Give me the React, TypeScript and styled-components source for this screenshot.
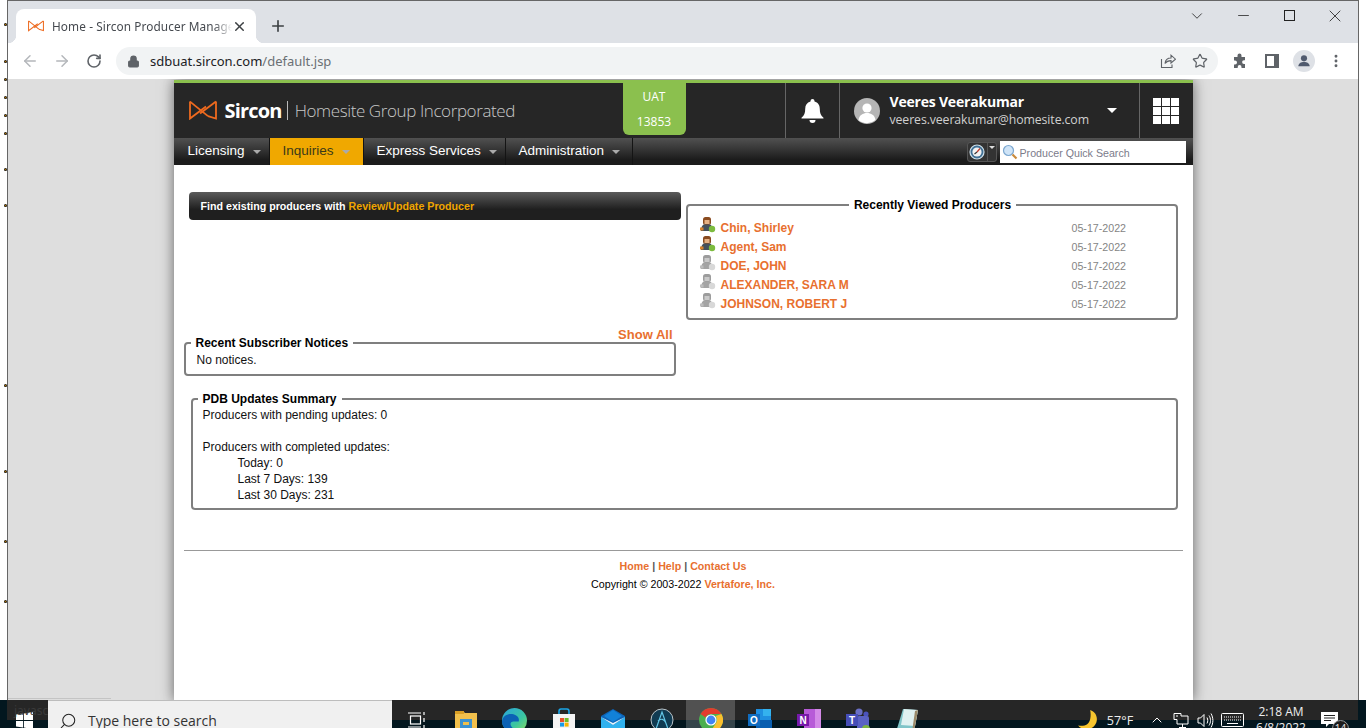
import styled, {createGlobalStyle} from 'styled-components';
import {ArrowLeft, ArrowRight, ChevronDown, ChevronUp, EllipsisVertical, Lock, Minus, Plus, RotateCw, Search, Star, X} from 'lucide-react';

const GlobalStyle = createGlobalStyle`
html, body {
    margin: 0;
    padding: 0;
    background: #fff;
    overflow: hidden;
}
* {
    box-sizing: border-box;
}
`

const Screen = styled.div`
position: relative;
display: flex;
flex-direction: column;
width: 1366px;
height: 728px;
overflow: hidden;
font-family: "Liberation Sans", Arial, sans-serif;
`

const Desk = styled.div`
display: flex;
height: 700px;
flex: none;
`

const Gutter = styled.div`
display: flex;
flex-direction: column;
align-items: flex-end;
width: 7px;
flex: none;
`

const Dot = styled.i<{$top: number}>`
display: block;
width: 3px;
height: 3px;
border-radius: 50%;
margin-top: ${p => p.$top}px;
background: radial-gradient(#a8700c 20%, #000 60%);
`

const Browser = styled.div`
display: flex;
flex-direction: column;
width: 1352px;
flex: none;
border: 1px solid #666;
border-bottom: 0;
`

const TabStrip = styled.div`
display: flex;
align-items: flex-end;
height: 42px;
flex: none;
padding-left: 8px;
background: #dee1e6;
`

const Tab = styled.div`
position: relative;
display: flex;
align-items: center;
width: 240px;
height: 34px;
padding: 0 9px 0 12px;
background: #fff;
border-radius: 8px 8px 0 0;

&::before, &::after {
    content: "";
    position: absolute;
    bottom: 0;
    width: 8px;
    height: 8px;
}
&::before {
    left: -8px;
    background: radial-gradient(circle at 0 0, transparent 8px, #fff 8.5px);
}
&::after {
    right: -8px;
    background: radial-gradient(circle at 100% 0, transparent 8px, #fff 8.5px);
}
`

const TabTitle = styled.span`
flex: 1;
margin-left: 8px;
overflow: hidden;
white-space: nowrap;
font-family: "Noto Sans", sans-serif;
font-size: 11.8px;
letter-spacing: 0.1px;
color: #45494f;
-webkit-mask-image: linear-gradient(to right, #000 90%, transparent 100%);
mask-image: linear-gradient(to right, #000 90%, transparent 100%);
`

const NewTab = styled.div`
display: flex;
align-items: center;
justify-content: center;
width: 28px;
height: 34px;
margin-left: 8px;
color: #3c4043;
`

const WindowControls = styled.div`
display: flex;
align-self: flex-start;
margin-left: auto;
`

const WindowButton = styled.div`
display: flex;
align-items: center;
justify-content: center;
width: 46px;
height: 29px;
color: #222;
`

const MaximizeGlyph = styled.i`
display: block;
width: 11px;
height: 11px;
border: 1px solid #222;
`

const Toolbar = styled.div`
display: flex;
align-items: center;
height: 36px;
flex: none;
padding-left: 6px;
background: #fff;
`

const ToolButton = styled.div<{$dim?: boolean}>`
display: flex;
align-items: center;
justify-content: center;
width: 32px;
height: 32px;
flex: none;
color: ${p => p.$dim ? '#b4b7bb' : '#5f6368'};
`

const Omnibox = styled.div`
display: flex;
align-items: center;
width: 1102px;
height: 28px;
margin: 0 6px;
padding: 0 2px 0 11px;
border-radius: 14px;
background: #f1f3f4;
color: #5f6368;
`

const Url = styled.span`
margin-left: 10px;
font-family: "Noto Sans", sans-serif;
font-size: 13px;
color: #202124;
`

const UrlPath = styled.span`
color: #6b7074;
`

const OmniActions = styled.div`
display: flex;
margin-left: auto;
`

const ProfileDisc = styled.div`
display: flex;
align-items: center;
justify-content: center;
width: 22px;
height: 22px;
border-radius: 50%;
background: #dee1e6;
`

const PageArea = styled.div`
position: relative;
flex: 1;
min-height: 0;
background: #dedede;
overflow: hidden;
`

const GhostTab = styled.div`
position: absolute;
left: 0;
bottom: 0;
width: 103px;
height: 2px;
border-top: 1px solid #c4c4c4;
`

const Sheet = styled.div`
width: 1019px;
height: 100%;
margin: 1px auto 0;
background: #fff;
box-shadow: 0 0 13px rgba(0, 0, 0, 0.55);
border-top: 3px solid #8bc04e;
`

const Header = styled.div`
display: flex;
height: 55px;
background: #262626;
`

const Brand = styled.div`
display: flex;
align-items: center;
width: 449px;
flex: none;
padding: 0 0 1px 15px;
`

const BrandName = styled.span`
margin-left: 8px;
font-family: "Open Sans", sans-serif;
font-size: 20px;
font-weight: 700;
letter-spacing: -0.8px;
color: #fff;
`

const BrandOrg = styled.span`
margin-left: 5px;
padding-left: 7px;
border-left: 1px solid #bbb;
font-family: "Open Sans", sans-serif;
font-size: 17px;
font-weight: 300;
line-height: 19px;
letter-spacing: -0.4px;
color: #c8c8c8;
`

const EnvBadge = styled.div`
position: relative;
z-index: 2;
display: flex;
flex-direction: column;
align-items: center;
justify-content: space-between;
width: 63px;
height: 52px;
flex: none;
padding: 6px 0 5px;
border-radius: 0 0 6px 6px;
background: #8bc04e;
font-family: "Open Sans", sans-serif;
font-size: 12px;
line-height: 16px;
color: #fff;
`

const BellCell = styled.div`
display: flex;
align-items: center;
justify-content: center;
width: 54px;
flex: none;
margin-left: 99px;
border-left: 1px solid #666;
`

const UserCell = styled.div`
display: flex;
align-items: center;
width: 300px;
flex: none;
padding-left: 14px;
border-left: 1px solid #666;
`

const UserText = styled.div`
display: flex;
flex-direction: column;
width: 217px;
margin-left: 10px;
font-family: "Open Sans", sans-serif;
`

const UserName = styled.span`
font-size: 14px;
font-weight: 700;
line-height: 18px;
letter-spacing: -0.2px;
color: #fff;
`

const UserMail = styled.span`
font-size: 12.3px;
line-height: 17px;
letter-spacing: -0.1px;
color: #d0d0d0;
`

const Caret = styled.i`
width: 0;
height: 0;
border-left: 5px solid transparent;
border-right: 5px solid transparent;
border-top: 5px solid #fff;
`

const AppsCell = styled.div`
display: flex;
align-items: center;
flex: 1;
padding-left: 13px;
border-left: 1px solid #666;
`

const AppsGrid = styled.div`
display: grid;
grid-template-columns: repeat(3, 8px);
grid-template-rows: repeat(3, 8px);
gap: 1px;
`

const AppsTile = styled.i`
background: #fff;
`

const Nav = styled.div`
display: flex;
height: 27px;
padding-left: 1px;
background: linear-gradient(#515151, #1c1c1c 80%);
`

const NavItem = styled.div<{$width: number; $active?: boolean}>`
display: flex;
align-items: center;
width: ${p => p.$width}px;
flex: none;
padding: 0 0 3px 13px;
border-right: 1px solid #141414;
background: ${p => p.$active ? '#f0a800' : 'transparent'};
font-size: 13.5px;
color: ${p => p.$active ? '#3a3a1a' : '#fff'};
`

const NavCaret = styled.i`
width: 0;
height: 0;
margin: 3px 0 0 8px;
border-left: 4px solid transparent;
border-right: 4px solid transparent;
border-top: 4px solid #aaa;
`

const NavTools = styled.div`
display: flex;
align-items: center;
margin-left: auto;
padding-right: 7px;
`

const HistoryButton = styled.div`
display: flex;
align-items: center;
width: 30px;
height: 20px;
margin-right: 3px;
border: 1px solid #555;
border-radius: 3px;
background: #333;
`

const HistoryFace = styled.div`
display: flex;
align-items: center;
justify-content: center;
width: 20px;
height: 100%;
border-right: 1px solid #555;
`

const HistoryCaret = styled.i`
width: 0;
height: 0;
margin: -8px 0 0 1px;
border-left: 3px solid transparent;
border-right: 3px solid transparent;
border-top: 3px solid #ddd;
`

const QuickSearch = styled.div`
display: flex;
align-items: center;
width: 186px;
height: 22px;
padding-left: 2px;
background: #fff;
font-size: 10.67px;
color: #7b7b8a;
`

const QuickLabel = styled.span`
margin: 2px 0 0 2px;
`

const Main = styled.div`
display: grid;
grid-template-columns: 492px 492px;
column-gap: 10px;
padding: 27px 0 0 10px;
`

const LeftColumn = styled.div`
display: flex;
flex-direction: column;
`

const Banner = styled.div`
width: 492px;
height: 28px;
margin-left: 5px;
padding: 0 12px;
border-radius: 4px;
background: linear-gradient(#5b5b5b, #1f1f1f 62%);
font-size: 10.67px;
font-weight: 700;
line-height: 28px;
color: #fff;
`

const BannerLink = styled.span`
color: #f0a500;
`

const ShowAll = styled.div`
margin: 107px 3px -6px 0;
text-align: right;
font-size: 13px;
font-weight: 700;
line-height: 15px;
color: #e8702f;
`

const Panel = styled.fieldset<{$mt?: number; $ml?: number; $width?: number}>`
display: block;
width: ${p => p.$width ?? 492}px;
min-width: 0;
margin: ${p => p.$mt ?? 0}px 0 0 ${p => p.$ml ?? 0}px;
border: 2px solid #7f7f7f;
border-radius: 4px;
font-size: 12px;
color: #111;
`

const PanelTitle = styled.legend<{$center?: boolean; $shift?: number}>`
margin: ${p => p.$center ? '0 auto' : `0 0 0 ${p.$shift ?? 0}px`};
padding: 0 5px;
font-size: 12px;
font-weight: 700;
line-height: 14px;
color: #000;
`

const RecentPanel = styled(Panel)`
height: 122px;
padding: 6px 10px 0 12px;
`

const NoticePanel = styled(Panel)`
height: 40px;
padding: 3px 10px 0 11px;
line-height: 14px;
`

const PdbPanel = styled(Panel)`
height: 118px;
padding: 1px 10px 0;
line-height: 16px;
`

const Row = styled.div`
display: flex;
align-items: center;
height: 19px;
`

const RowName = styled.span`
width: 351px;
margin-left: 5px;
font-weight: 700;
color: #e8702f;
`

const RowDate = styled.span`
font-size: 10.67px;
color: #848484;
`

const PdbLine = styled.div<{$indent?: boolean}>`
min-height: 16px;
padding-left: ${p => p.$indent ? 35 : 0}px;
`

const Footer = styled.div`
width: 999px;
margin: 40px 0 0 10px;
padding-top: 8px;
border-top: 1px solid #999;
text-align: center;
font-size: 10.67px;
line-height: 14px;
`

const FooterLinks = styled.div`
font-weight: 700;
color: #555;
`

const FooterLink = styled.span`
font-weight: 700;
color: #e8702f;
`

const Copyright = styled.div`
margin-top: 4px;
color: #000;
`

const Taskbar = styled.div`
position: relative;
display: flex;
height: 40px;
flex: none;
background: linear-gradient(#262626, #262626) 7px 0 / 1351px 20px no-repeat, #03171f;
color: #fff;
`

const GhostLabel = styled.span`
position: absolute;
left: 14px;
top: 2px;
font-family: "Noto Sans", sans-serif;
font-size: 12px;
color: #3a3a3a;
`

const StartCell = styled.div`
position: relative;
display: flex;
align-items: center;
justify-content: center;
width: 48px;
flex: none;
overflow: hidden;
`

const SearchBox = styled.div`
display: flex;
align-items: center;
width: 344px;
flex: none;
padding-left: 11px;
border-top: 1px solid #bdbdbd;
background: #f0f0f0;
color: #222;
`

const SearchText = styled.span`
margin-left: 11px;
font-family: "Open Sans", sans-serif;
font-size: 14px;
color: #333;
`

const TaskCell = styled.div<{$on?: boolean}>`
display: flex;
align-items: center;
justify-content: center;
width: 49px;
flex: none;
background: ${p => p.$on ? 'rgba(255, 255, 255, 0.2)' : 'transparent'};
`

const Tray = styled.div`
display: flex;
margin-left: auto;
padding-right: 16px;
`

const TrayCell = styled.div<{$width: number}>`
display: flex;
align-items: center;
justify-content: center;
width: ${p => p.$width}px;
flex: none;
`

const Temp = styled.span`
margin-right: 5px;
font-family: "Open Sans", sans-serif;
font-size: 12.6px;
color: #eee;
`

const Clock = styled.div`
font-family: "Open Sans", sans-serif;
font-size: 12px;
line-height: 16px;
text-align: center;
color: #eee;
`

const NoteBadge = styled.span`
position: absolute;
left: 11px;
top: 12px;
width: 17px;
height: 17px;
border: 1px solid #999;
border-radius: 50%;
background: #1c1c1c;
font-family: "Open Sans", sans-serif;
font-size: 10px;
line-height: 15px;
text-align: center;
color: #eee;
`

const NoteHolder = styled.div`
position: relative;
width: 24px;
height: 24px;
padding-top: 4px;
`

function SirconMark({width}: {width: number}) {
    return (
        <svg width={width} height={width * 0.72} viewBox="0 0 28 20" fill="none" stroke="#ee6a1f" strokeWidth="1.8">
            <path d="M1 1.5V18.5L17 6.5" />
            <path d="M1 1.5L19 16" />
            <path d="M27 1.5V18.5L19 16" />
            <path d="M27 1.5L11 13.5" />
        </svg>
    );
}

function ProfileGlyph({size, color}: {size: number; color: string}) {
    return (
        <svg width={size} height={size} viewBox="0 0 24 24" fill={color}>
            <circle cx="12" cy="8" r="4.6" />
            <path d="M3.5 20c0-4.4 4-6.5 8.5-6.5s8.5 2.1 8.5 6.5z" />
        </svg>
    );
}

function BellGlyph() {
    return (
        <svg width="25" height="25" viewBox="0 0 25 25" fill="#fff">
            <path d="M12.5 1a2 2 0 0 1 2 2v.6c3.6.9 5.3 3.8 5.3 7.4 0 4 .9 6.4 3.7 8.8v.7H1.5v-.7c2.8-2.4 3.7-4.8 3.7-8.8 0-3.6 1.7-6.5 5.3-7.4V3a2 2 0 0 1 2-2z" />
            <path d="M9.5 22h6a3 3 0 0 1-6 0z" />
        </svg>
    );
}

function ShareGlyph() {
    return (
        <svg width="16" height="16" viewBox="0 0 16 16" fill="none" stroke="#5f6368" strokeWidth="1.1">
            <path d="M1.5 6V14.5H12V11.5" />
            <path d="M5 10.5C5.4 7 8 5 11 5V2.2L15.5 6.2 11 10V7.6C8.6 7.6 6.4 8.4 5 10.5z" />
        </svg>
    );
}

function ProducerIcon({active}: {active: boolean}) {
    const hair = active ? '#8a4b1f' : '#9c9c9c';
    const skin = active ? '#e6b184' : '#c9c9c9';
    const suit = active ? '#45505c' : '#a4a4a4';
    const dot = active ? '#7cbb3e' : '#d8d8d8';
    return (
        <svg width="16" height="16" viewBox="0 0 16 16" style={{marginTop: -6, flex: 'none'}}>
            <rect x="3" y="0" width="8" height="8" rx="2.5" fill={hair} />
            <rect x="4.5" y="3" width="5" height="4" fill={skin} />
            <path d="M1 14c0-4 1.500-6.500 3.500-6.500h5c1.500 0 2.500 1.500 2.500 3.500V14z" fill={suit} />
            <rect x="0" y="10.500" width="3.500" height="3" fill={active ? '#d9822b' : '#bdbdbd'} />
            <circle cx="12" cy="12" r="3.200" fill={dot} />
        </svg>
    );
}

function StartLogo() {
    return (
        <svg width="17" height="17" viewBox="0 0 16 16" fill="#fff">
            <path d="M0 2.3L6.6 1.4V7.6H0zM7.4 1.3L16 0V7.6H7.4zM0 8.4H6.6V14.6L0 13.7zM7.4 8.4H16V16L7.4 14.7z" />
        </svg>
    );
}

function TaskView() {
    return (
        <svg width="20" height="20" viewBox="0 0 20 20" fill="none" stroke="#fff" strokeWidth="1.2">
            <rect x="3.5" y="6" width="10" height="8" />
            <path d="M1 3H14M1 17H14M17 2V5M17 8V12M17 15V18" />
        </svg>
    );
}

function FolderIcon() {
    return (
        <svg width="24" height="24" viewBox="0 0 24 24">
            <path d="M1 3h8l2 2h12v18H1z" fill="#f1c04c" />
            <rect x="1" y="3" width="9" height="3" fill="#d99e24" />
            <rect x="6" y="11" width="12" height="9" fill="#3c92d0" />
            <rect x="9" y="14" width="6" height="3" fill="#f1c04c" />
        </svg>
    );
}

function EdgeIcon() {
    return (
        <svg width="25" height="25" viewBox="0 0 24 24">
            <defs>
                <linearGradient id="edgeRim" x1="0" y1="0" x2="1" y2="1">
                    <stop offset="0" stopColor="#2aa5dd" />
                    <stop offset="0.6" stopColor="#3bc6a0" />
                    <stop offset="1" stopColor="#8fdc5c" />
                </linearGradient>
            </defs>
            <circle cx="12" cy="12" r="12" fill="url(#edgeRim)" />
            <path d="M0 13C1 7 6 5 11 6c4 1 6 4 5 7h-5c-3 0-4 3-1 6 2 2 6 3 9 1-3 4-8 5-12 3-4-2-7-6-7-10z" fill="#0c62b5" />
        </svg>
    );
}

function StoreIcon() {
    return (
        <svg width="24" height="24" viewBox="0 0 24 24">
            <path d="M7 7V3.500C7 2 8 1 9 1h6c1 0 2 1 2 2.500V7" fill="none" stroke="#1aa5e6" strokeWidth="1.6" />
            <rect x="1" y="6" width="22" height="18" fill="#f4f4f4" />
            <rect x="8" y="10" width="4" height="4" fill="#e8502a" />
            <rect x="12.600" y="10" width="4" height="4" fill="#6fbb2a" />
            <rect x="8" y="14.600" width="4" height="4" fill="#1a9be8" />
            <rect x="12.600" y="14.600" width="4" height="4" fill="#f7b500" />
        </svg>
    );
}

function MailIcon() {
    return (
        <svg width="24" height="24" viewBox="0 0 24 24">
            <path d="M12 1L24 8V24H0V8z" fill="#0c64b8" />
            <path d="M0 9L12 17 24 9V24H0z" fill="#2fb1ee" />
            <path d="M3 8L12 2 21 8 12 14z" fill="#1281d8" />
            <path d="M0 9L12 17 24 9 12 15z" fill="#e6f5fd" />
        </svg>
    );
}

function ArcIcon() {
    return (
        <svg width="24" height="24" viewBox="0 0 24 24" fill="none">
            <circle cx="12" cy="12" r="11" fill="#103b52" stroke="#b9c3c8" strokeWidth="1" />
            <path d="M6 21L12 4 18 21M8 13C11 10 14 11 16 15" stroke="#63c6e6" strokeWidth="1.2" />
        </svg>
    );
}

function ChromeIcon() {
    return (
        <svg width="24" height="24" viewBox="0 0 24 24">
            <circle cx="12" cy="12" r="12" fill="#4caf50" />
            <path d="M12 0A12 12 0 0 1 22.400 6H12A6 6 0 0 0 6.600 9.400L1.600 6A12 12 0 0 1 12 0z" fill="#e33b2e" />
            <path d="M22.400 6A12 12 0 0 1 11 24L16.400 16A6 6 0 0 0 16.600 8z" fill="#fbc02d" />
            <circle cx="12" cy="12" r="5.600" fill="#fff" />
            <circle cx="12" cy="12" r="4.400" fill="#4285f4" />
        </svg>
    );
}

function OutlookIcon() {
    return (
        <svg width="24" height="24" viewBox="0 0 24 24">
            <rect x="8" y="1" width="15" height="14" fill="#1f8fe0" />
            <rect x="15" y="1" width="8" height="7" fill="#34b2ee" />
            <path d="M8 12h16v12H8z" fill="#0a5fb0" />
            <rect x="0" y="6" width="12" height="12" fill="#0f6cc0" />
            <text x="6" y="16" textAnchor="middle" fontSize="10" fontWeight="700" fill="#fff" fontFamily="Liberation Sans">O</text>
        </svg>
    );
}

function OneNoteIcon() {
    return (
        <svg width="24" height="24" viewBox="0 0 24 24">
            <rect x="7" y="1" width="17" height="23" fill="#b75ad8" />
            <rect x="18" y="1" width="6" height="23" fill="#d48ae8" />
            <rect x="0" y="6" width="12" height="12" fill="#7719aa" />
            <text x="6" y="16" textAnchor="middle" fontSize="10" fontWeight="700" fill="#fff" fontFamily="Liberation Sans">N</text>
        </svg>
    );
}

function TeamsIcon() {
    return (
        <svg width="24" height="24" viewBox="0 0 24 24">
            <circle cx="13" cy="4" r="3.600" fill="#6a6fc6" />
            <circle cx="20" cy="6" r="2.600" fill="#4b53bc" />
            <rect x="11" y="8" width="12" height="14" rx="2" fill="#5a62c4" />
            <rect x="0" y="6" width="12" height="12" fill="#464eb8" />
            <text x="6" y="16" textAnchor="middle" fontSize="10" fontWeight="700" fill="#fff" fontFamily="Liberation Sans">T</text>
            <circle cx="20" cy="21" r="4" fill="#7cb342" />
        </svg>
    );
}

function NotesIcon() {
    return (
        <svg width="24" height="24" viewBox="0 0 24 24">
            <path d="M8 1L23 2 19 24H1z" fill="#7fc4c8" />
            <path d="M9 1L23 2 20 18 6 17z" fill="#dff1f1" />
            <path d="M20 3L23 2 19 24 17 24z" fill="#9b8a6a" />
        </svg>
    );
}

function TrayNetwork() {
    return (
        <svg width="17" height="17" viewBox="0 0 17 17" fill="none" stroke="#fff" strokeWidth="1">
            <path d="M1 1.500H8V4H15V12H4V7.500H1zM9.500 12V15M6 15.500H13M3 4H5" />
        </svg>
    );
}

function TrayVolume() {
    return (
        <svg width="17" height="17" viewBox="0 0 17 17" fill="none" stroke="#fff" strokeWidth="1">
            <path d="M1 6H3.500L7 2.500V14.500L3.500 11H1zM10 5.500C11 7.500 11 9.500 10 11.500M12 3.500C14 6.500 14 10.500 12 13.500M14 1.500C16.500 6 16.500 11 14 15.500" />
        </svg>
    );
}

function TrayKeyboard() {
    return (
        <svg width="23" height="14" viewBox="0 0 23 14" fill="none" stroke="#fff" strokeWidth="1">
            <rect x="0.500" y="0.500" width="22" height="13" rx="1" />
            <path d="M3 4H20M3 7H20" strokeDasharray="1 1" />
            <path d="M6 10.500H17" />
        </svg>
    );
}

function MoonIcon() {
    return (
        <svg width="22" height="22" viewBox="0 0 20 20">
            <path d="M12 1C18 3 20 10 16 15c-4 5-12 4-15 0 6 1 10-1 11-6 .6-3 .5-5 0-8z" fill="#f7c52e" />
        </svg>
    );
}

function NoteIcon() {
    return (
        <svg width="17" height="15" viewBox="0 0 17 15" fill="#fff">
            <path d="M0 0H17V12H8L5 15V12H0z" />
            <path d="M3 3.500H14M3 6H14M3 8.500H10" stroke="#222" strokeWidth="1" />
        </svg>
    );
}

function HistoryIcon() {
    return (
        <svg width="16" height="16" viewBox="0 0 16 16">
            <circle cx="8" cy="8" r="7" fill="#3f6f94" stroke="#cfe0ea" strokeWidth="1.200" />
            <circle cx="8" cy="8" r="4.600" fill="#f2f2f2" />
            <path d="M8 8L11 4.500" stroke="#c0392b" strokeWidth="1.200" />
            <path d="M8 8L5.500 10" stroke="#333" strokeWidth="1.200" />
        </svg>
    );
}

function LensIcon() {
    return (
        <svg width="16" height="16" viewBox="0 0 16 16">
            <circle cx="6.500" cy="6.500" r="5" fill="#cfe4f7" stroke="#7ba7d0" strokeWidth="1.200" />
            <path d="M10.500 10.500L14.500 14.500" stroke="#c98a3a" strokeWidth="2.200" />
        </svg>
    );
}

const producers = [
    {name: 'Chin, Shirley', active: true},
    {name: 'Agent, Sam', active: true},
    {name: 'DOE, JOHN', active: false},
    {name: 'ALEXANDER, SARA M', active: false},
    {name: 'JOHNSON, ROBERT J', active: false},
];

const navItems = [
    {label: 'Licensing', width: 95},
    {label: 'Inquiries', width: 94, active: true},
    {label: 'Express Services', width: 142},
    {label: 'Administration', width: 127},
];

const dotGaps = [23, 34, 15, 15, 15, 15, 33, 33, 177, 83, 67, 57];

const taskIcons = [
    <TaskView key="view" />,
    <FolderIcon key="folder" />,
    <EdgeIcon key="edge" />,
    <StoreIcon key="store" />,
    <MailIcon key="mail" />,
    <ArcIcon key="arc" />,
    <ChromeIcon key="chrome" />,
    <OutlookIcon key="outlook" />,
    <OneNoteIcon key="onenote" />,
    <TeamsIcon key="teams" />,
    <NotesIcon key="notes" />,
];

export default function App() {
    return (
        <Screen>
            <GlobalStyle />
            <Desk>
                <Gutter>
                    {dotGaps.map((gap, i) => <Dot key={i} $top={gap} />)}
                </Gutter>
                <Browser>
                    <TabStrip>
                        <Tab>
                            <SirconMark width={16} />
                            <TabTitle>Home - Sircon Producer Manage</TabTitle>
                            <X size={15} color="#3c4043" strokeWidth={2.4} />
                        </Tab>
                        <NewTab><Plus size={18} strokeWidth={2.2} /></NewTab>
                        <WindowControls>
                            <WindowButton><ChevronDown size={18} strokeWidth={1.1} /></WindowButton>
                            <WindowButton><Minus size={17} strokeWidth={1.1} /></WindowButton>
                            <WindowButton><MaximizeGlyph /></WindowButton>
                            <WindowButton><X size={20} strokeWidth={1} /></WindowButton>
                        </WindowControls>
                    </TabStrip>
                    <Toolbar>
                        <ToolButton $dim><ArrowLeft size={18} strokeWidth={2} /></ToolButton>
                        <ToolButton $dim><ArrowRight size={18} strokeWidth={2} /></ToolButton>
                        <ToolButton><RotateCw size={16} strokeWidth={2.4} /></ToolButton>
                        <Omnibox>
                            <Lock size={13} fill="#5f6368" strokeWidth={2} />
                            <Url>sdbuat.sircon.com<UrlPath>/default.jsp</UrlPath></Url>
                            <OmniActions>
                                <ToolButton><ShareGlyph /></ToolButton>
                                <ToolButton><Star size={16} strokeWidth={1.8} /></ToolButton>
                            </OmniActions>
                        </Omnibox>
                        <ToolButton>
                            <svg width="16" height="16" viewBox="0 0 16 16" fill="#5f6368">
                                <path d="M5.500 2.500a2 2 0 0 1 4 0V4H13v3.200h-1a1.900 1.900 0 0 0 0 3.800h1V15H9.500v-1a1.900 1.900 0 0 0-3.800 0v1H2v-3.600h1a2 2 0 0 0 0-4H2V4h3.500z" />
                            </svg>
                        </ToolButton>
                        <ToolButton>
                            <svg width="14" height="14" viewBox="0 0 14 14">
                                <path d="M0 0H14V14H0zM2 2V12H9V2z" fill="#5f6368" fillRule="evenodd" />
                            </svg>
                        </ToolButton>
                        <ToolButton>
                            <ProfileDisc><ProfileGlyph size={16} color="#505a6e" /></ProfileDisc>
                        </ToolButton>
                        <ToolButton><EllipsisVertical size={16} strokeWidth={2.4} /></ToolButton>
                    </Toolbar>
                    <PageArea>
                        <Sheet>
                            <Header>
                                <Brand>
                                    <SirconMark width={28} />
                                    <BrandName>Sircon</BrandName>
                                    <BrandOrg>Homesite Group Incorporated</BrandOrg>
                                </Brand>
                                <EnvBadge>
                                    <span>UAT</span>
                                    <span>13853</span>
                                </EnvBadge>
                                <BellCell><BellGlyph /></BellCell>
                                <UserCell>
                                    <svg width="26" height="26" viewBox="0 0 26 26">
                                        <circle cx="13" cy="13" r="13" fill="#b5b5b5" />
                                        <circle cx="13" cy="10" r="4.600" fill="#fff" />
                                        <path d="M4.500 22c.8-5 4.400-7 8.500-7s7.700 2 8.500 7a13 13 0 0 1-17 0z" fill="#fff" />
                                    </svg>
                                    <UserText>
                                        <UserName>Veeres Veerakumar</UserName>
                                        <UserMail>veeres.veerakumar@homesite.com</UserMail>
                                    </UserText>
                                    <Caret />
                                </UserCell>
                                <AppsCell>
                                    <AppsGrid>
                                        {Array.from({length: 9}, (_, i) => <AppsTile key={i} />)}
                                    </AppsGrid>
                                </AppsCell>
                            </Header>
                            <Nav>
                                {navItems.map(item => (
                                    <NavItem key={item.label} $width={item.width} $active={item.active}>
                                        {item.label}
                                        <NavCaret />
                                    </NavItem>
                                ))}
                                <NavTools>
                                    <HistoryButton>
                                        <HistoryFace><HistoryIcon /></HistoryFace>
                                        <HistoryCaret />
                                    </HistoryButton>
                                    <QuickSearch>
                                        <LensIcon />
                                        <QuickLabel>Producer Quick Search</QuickLabel>
                                    </QuickSearch>
                                </NavTools>
                            </Nav>
                            <Main>
                                <LeftColumn>
                                    <Banner>
                                        Find existing producers with <BannerLink>Review/Update Producer</BannerLink>
                                    </Banner>
                                    <ShowAll>Show All</ShowAll>
                                    <NoticePanel>
                                        <PanelTitle $shift={-6}>Recent Subscriber Notices</PanelTitle>
                                        No notices.
                                    </NoticePanel>
                                </LeftColumn>
                                <RecentPanel $mt={6}>
                                    <PanelTitle $center>Recently Viewed Producers</PanelTitle>
                                    {producers.map(p => (
                                        <Row key={p.name}>
                                            <ProducerIcon active={p.active} />
                                            <RowName>{p.name}</RowName>
                                            <RowDate>05-17-2022</RowDate>
                                        </Row>
                                    ))}
                                </RecentPanel>
                            </Main>
                            <PdbPanel $mt={16} $ml={17} $width={987}>
                                <PanelTitle $shift={-5}>PDB Updates Summary</PanelTitle>
                                <PdbLine>Producers with pending updates: 0</PdbLine>
                                <PdbLine />
                                <PdbLine>Producers with completed updates:</PdbLine>
                                <PdbLine $indent>Today: 0</PdbLine>
                                <PdbLine $indent>Last 7 Days: 139</PdbLine>
                                <PdbLine $indent>Last 30 Days: 231</PdbLine>
                            </PdbPanel>
                            <Footer>
                                <FooterLinks>
                                    <FooterLink>Home</FooterLink> | <FooterLink>Help</FooterLink> | <FooterLink>Contact Us</FooterLink>
                                </FooterLinks>
                                <Copyright>Copyright © 2003-2022 <FooterLink>Vertafore, Inc.</FooterLink></Copyright>
                            </Footer>
                        </Sheet>
                        <GhostTab />
                    </PageArea>
                </Browser>
            </Desk>
            <Taskbar>
                <StartCell>
                    <GhostLabel>javascr</GhostLabel>
                    <StartLogo />
                </StartCell>
                <SearchBox>
                    <Search size={18} strokeWidth={1.4} style={{transform: 'scaleX(-1)'}} />
                    <SearchText>Type here to search</SearchText>
                </SearchBox>
                {taskIcons.map(icon => (
                    <TaskCell key={icon.key} $on={icon.key === 'chrome'}>{icon}</TaskCell>
                ))}
                <Tray>
                    <TrayCell $width={25}><MoonIcon /></TrayCell>
                    <TrayCell $width={45}><Temp>57°F</Temp></TrayCell>
                    <TrayCell $width={24}><ChevronUp size={16} strokeWidth={1.5} /></TrayCell>
                    <TrayCell $width={24}><TrayNetwork /></TrayCell>
                    <TrayCell $width={25}><TrayVolume /></TrayCell>
                    <TrayCell $width={28}><TrayKeyboard /></TrayCell>
                    <TrayCell $width={70}><Clock>2:18 AM<br />6/8/2022</Clock></TrayCell>
                    <TrayCell $width={34}>
                        <NoteHolder>
                            <NoteIcon />
                            <NoteBadge>14</NoteBadge>
                        </NoteHolder>
                    </TrayCell>
                </Tray>
            </Taskbar>
        </Screen>
    );
}
